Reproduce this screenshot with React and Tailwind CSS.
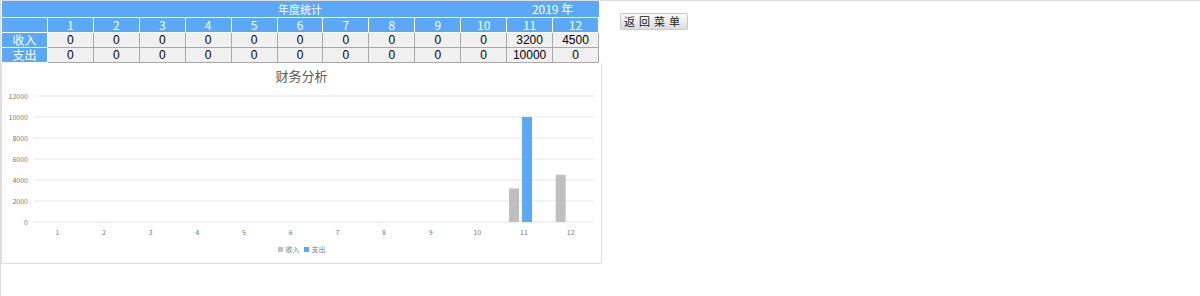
import React from "react";

const months = [1, 2, 3, 4, 5, 6, 7, 8, 9, 10, 11, 12];
const income = [0, 0, 0, 0, 0, 0, 0, 0, 0, 0, 3200, 4500];
const expense = [0, 0, 0, 0, 0, 0, 0, 0, 0, 0, 10000, 0];

const cjk = { fontFamily: '"Noto Sans CJK SC", "Noto Sans", sans-serif' };

// chart geometry (svg coords)
const plotLeft = 32;
const plotRight = 592;
const plotTop = 8;
const plotBottom = 134;
const maxY = 12000;
const catW = (plotRight - plotLeft) / 12;
const yOf = (v) => plotBottom - (v / maxY) * (plotBottom - plotTop);

const Chart = () => {
  const ticks = [0, 2000, 4000, 6000, 8000, 10000, 12000];
  return (
    <svg width="600" height="152" className="block" style={cjk}>
      {ticks.map((t) => (
        <g key={t}>
          <line x1={plotLeft} x2={plotRight} y1={yOf(t)} y2={yOf(t)} stroke="#e4e4e4" strokeWidth="1" />
          <text x="26" y={yOf(t) + 2.5} textAnchor="end" fontSize="7" fill="#777">
            {t}
          </text>
        </g>
      ))}
      {months.map((m, i) => {
        const cx = plotLeft + catW * (i + 0.5);
        return (
          <g key={m}>
            <text x={cx} y="147" textAnchor="middle" fontSize="7" fill="#777">
              {m}
            </text>
            {income[i] > 0 && (
              <rect x={cx - 15} y={yOf(income[i])} width="10" height={plotBottom - yOf(income[i])} fill="#bfbfbf" />
            )}
            {expense[i] > 0 && (
              <rect x={cx - 2} y={yOf(expense[i])} width="10" height={plotBottom - yOf(expense[i])} fill="#5ba8f7" />
            )}
          </g>
        );
      })}
    </svg>
  );
};

const App = () => {
  return (
    <div className="w-[1200px] h-[296px] bg-white border-l border-t border-[#dcdcdc] flex items-start" style={cjk}>
      {/* left: table + chart */}
      <div className="w-[601px] flex flex-col">
        <table className="w-[598px] table-fixed border-collapse text-[12px]">
          <tbody>
            <tr className="bg-[#5ba8f7] text-white">
              <td colSpan={13} className="p-0">
                <div className="grid grid-cols-13 items-center h-[16px] leading-[16px]">
                  <div className="col-start-1 col-span-13 row-start-1 text-center text-[11px]">年度统计</div>
                  <div className="col-start-12 col-span-2 row-start-1 text-center">2019 年</div>
                </div>
              </td>
            </tr>
            <tr className="bg-[#5ba8f7] text-white">
              <td className="w-[46px] border border-white p-0">
                <div className="h-[14px]"></div>
              </td>
              {months.map((m) => (
                <td key={m} className="w-[46px] border border-white p-0 text-center">
                  <div className="h-[14px] leading-[14px]">{m}</div>
                </td>
              ))}
            </tr>
            {[
              ["收入", income],
              ["支出", expense],
            ].map(([label, vals]) => (
              <tr key={label}>
                <td className="border border-white bg-[#5ba8f7] text-white text-center p-0">
                  <div className="h-[14px] leading-[14px]">{label}</div>
                </td>
                {vals.map((v, i) => (
                  <td
                    key={i}
                    className="border border-[#a8a8a8] bg-[#f0f0f0] text-black text-center p-0"
                    style={{ fontFamily: '"Liberation Sans", Arial, sans-serif' }}
                  >
                    <div className="h-[14px] leading-[14px]">{v}</div>
                  </td>
                ))}
              </tr>
            ))}
          </tbody>
        </table>

        {/* chart box */}
        <div className="w-[601px] border-l border-r border-b border-[#dedede] flex flex-col">
          <div className="h-[25px] leading-[25px] text-center text-[13px] text-[#595959]">财务分析</div>
          <Chart />
          <div className="h-[18px] flex items-center justify-center gap-[3px] text-[7px] text-[#777]">
            <span className="w-[5px] h-[5px] bg-[#bfbfbf]"></span>
            <span>收入</span>
            <span className="w-[5px] h-[5px] bg-[#5ba8f7] ml-[1px]"></span>
            <span>支出</span>
          </div>
          <div className="h-[5px]"></div>
        </div>
      </div>

      {/* right: back button */}
      <div className="flex pl-[18px] pt-[12px]">
        <button className="h-[17px] px-[3px] text-[11px] leading-none tracking-[4px] text-[#222] border border-[#c8c8c8] rounded-[2px] bg-gradient-to-b from-[#fafafa] to-[#dcdcdc]">
          返回菜单
        </button>
      </div>
    </div>
  );
};

export default App;
